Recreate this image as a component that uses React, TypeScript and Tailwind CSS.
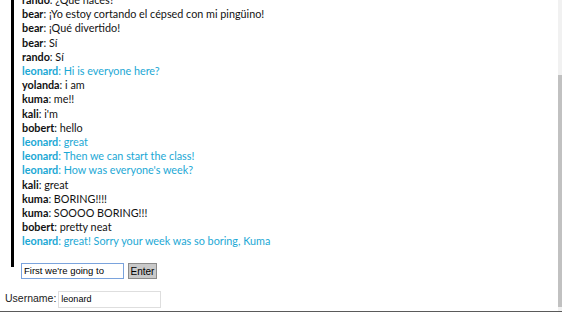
import { useState } from "react";

type Message = { user: string; text: string };

const messages: Message[] = [
    { user: "rando", text: "¿Qué haces?" },
    { user: "bear", text: "¡Yo estoy cortando el cépsed con mi pingüino!" },
    { user: "bear", text: "¡Qué divertido!" },
    { user: "bear", text: "Sí" },
    { user: "rando", text: "Sí" },
    { user: "leonard", text: "Hi is everyone here?" },
    { user: "yolanda", text: "i am" },
    { user: "kuma", text: "me!!" },
    { user: "kali", text: "i'm" },
    { user: "bobert", text: "hello" },
    { user: "leonard", text: "great" },
    { user: "leonard", text: "Then we can start the class!" },
    { user: "leonard", text: "How was everyone's week?" },
    { user: "kali", text: "great" },
    { user: "kuma", text: "BORING!!!!" },
    { user: "kuma", text: "SOOOO BORING!!!" },
    { user: "bobert", text: "pretty neat" },
    { user: "leonard", text: "great! Sorry your week was so boring, Kuma" },
];

export default function App() {
    const [ username, setUsername ] = useState("leonard");
    const [ draft, setDraft ]       = useState("First we're going to");

    return (
        <div className="w-[562px] h-[312px] overflow-hidden flex flex-row bg-white border-b border-[#5a5a5a]">
            <div className="flex-1 flex flex-col overflow-hidden">
                {/* chat log, scrolled a little */}
                <div className="ml-[11px] border-l-[3px] border-black pl-[8px] pb-[18px] mt-[-7px] font-['Lato',sans-serif] text-[10.8px] leading-[14.2px]">
                    {messages.map((m, i) => (
                        <div key={i} className={m.user === username ? "text-[#1ba8d5]" : "text-[#111]"}>
                            <span className="font-bold">{m.user}</span>: {m.text}
                        </div>
                    ))}
                </div>

                <form className="flex flex-row items-center gap-[4px] ml-[21px] mt-[-4px] font-['Liberation_Sans',sans-serif] text-[9.5px]"
                      onSubmit={e => e.preventDefault()}>
                    <input value={draft} onChange={e => setDraft(e.target.value)}
                           className="w-[103px] h-[16px] px-[2px] border border-[#7aa3dd] outline-none text-black"/>
                    <button type="submit"
                            className="w-[29px] h-[16px] bg-[#c9c9c9] border border-[#8a8a8a] text-black text-[10px]">
                        Enter
                    </button>
                </form>

                <div className="flex flex-row items-center ml-[5px] mt-[12px] font-['Liberation_Sans',sans-serif] text-[10.5px] text-[#222]">
                    <label className="mr-[2px]">Username:</label>
                    <input value={username} onChange={e => setUsername(e.target.value)}
                           className="w-[103px] h-[17px] px-[2px] border border-[#dedede] outline-none text-[9px] text-black"/>
                </div>
            </div>

            {/* page scrollbar */}
            <div className="w-[4px] flex flex-col">
                <div className="h-[75px] bg-[#f1f1f1]"/>
                <div className="flex-1 bg-[#c1c1c1]"/>
                <div className="h-[4px] bg-[#f1f1f1]"/>
            </div>
        </div>
    );
}
